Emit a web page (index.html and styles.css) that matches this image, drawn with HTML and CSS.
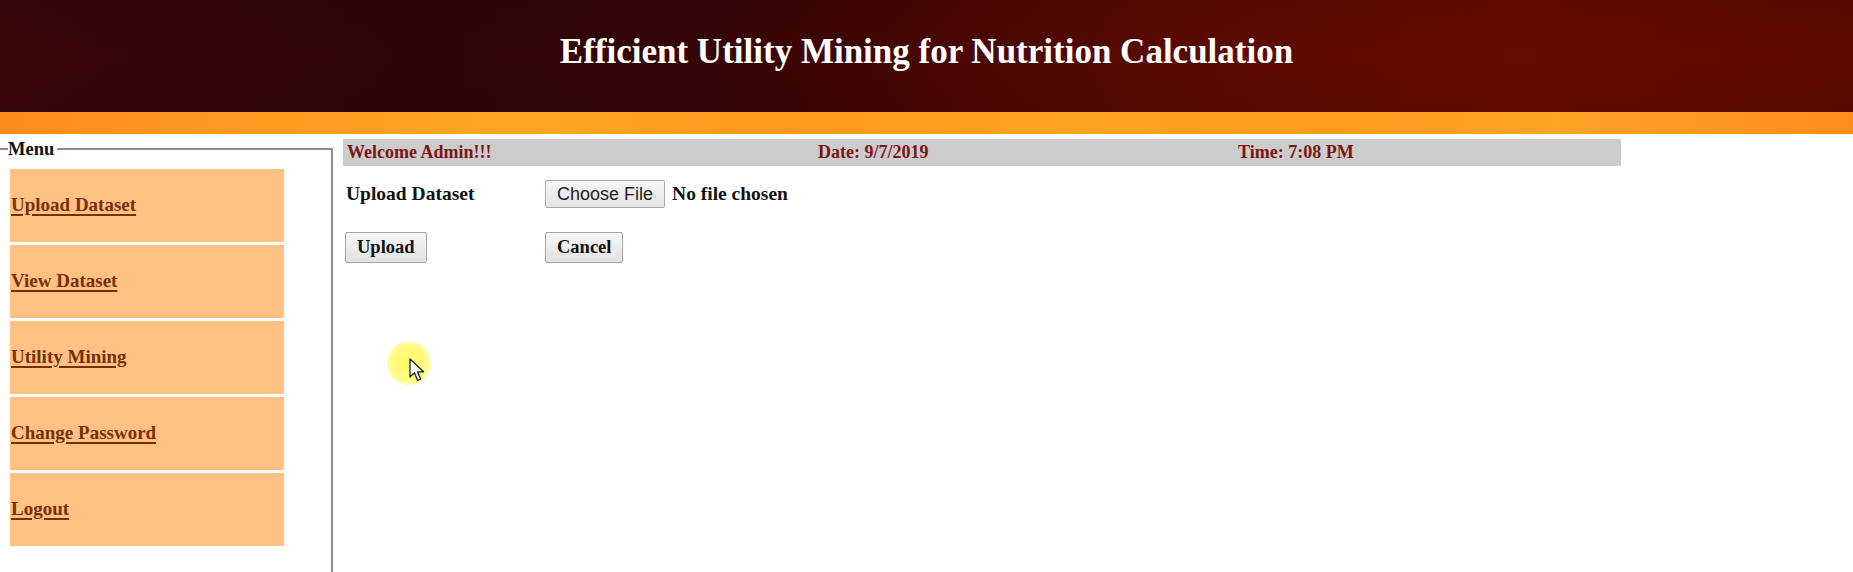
FILE: index.html
```html
<!DOCTYPE html>
<html lang="en">
<head>
<meta charset="utf-8">
<title>Efficient Utility Mining for Nutrition Calculation</title>
<link rel="stylesheet" href="styles.css">
</head>
<body>
<header class="top">
  <h1 class="title">Efficient Utility Mining for Nutrition Calculation</h1>
</header>
<div class="band"></div>
<div class="main">
  <fieldset class="menu">
    <legend class="menu-legend">Menu</legend>
    <nav class="menu-list">
      <a class="menu-item" href="#">Upload Dataset</a>
      <a class="menu-item" href="#">View Dataset</a>
      <a class="menu-item" href="#">Utility Mining</a>
      <a class="menu-item" href="#">Change Password</a>
      <a class="menu-item" href="#">Logout</a>
    </nav>
  </fieldset>
  <section class="content">
    <div class="status-bar">
      <span class="status-cell">Welcome Admin!!!</span>
      <span class="status-cell">Date: 9/7/2019</span>
      <span class="status-cell">Time: 7:08 PM</span>
    </div>
    <form class="upload-form">
      <span class="form-label">Upload Dataset</span>
      <label class="file-field">
        <span class="file-btn">Choose File</span>
        <span class="file-name">No file chosen</span>
      </label>
      <span class="form-cell"><button type="button" class="btn">Upload</button></span>
      <span class="form-cell"><button type="button" class="btn">Cancel</button></span>
    </form>
  </section>
</div>
<div class="cursor-glow"></div>
<svg class="cursor" width="16" height="26" viewBox="0 0 16 26">
  <path d="M1 1 L1 19 L5.5 14.8 L8.6 22.5 L11.6 21.2 L8.6 13.8 L14.6 13.8 Z" fill="#fff" stroke="#222" stroke-width="1.3" stroke-linejoin="round"/>
</svg>
</body>
</html>
```
FILE: styles.css
```css
html, body {
  margin: 0;
  padding: 0;
}
body {
  background: #fff;
  font-family: "Liberation Serif", "Times New Roman", serif;
  font-weight: bold;
  font-size: 19px;
  color: #111;
  overflow: hidden;
  height: 572px;
  position: relative;
}
.top {
  height: 112px;
  display: flex;
  align-items: center;
  justify-content: center;
  background:
    linear-gradient(180deg, rgba(0,0,0,0.06) 0%, rgba(0,0,0,0) 50%, rgba(0,0,0,0.05) 100%),
    linear-gradient(90deg, #3c0808 0%, #2e0404 22%, #350505 38%, #4a0703 52%, #5c0a02 66%, #660c00 82%, #5e0a00 100%);
}
.title {
  margin: 0;
  color: #fff;
  font-size: 35px;
  font-weight: bold;
  line-height: 1;
  padding-bottom: 10px;
}
.band {
  height: 22px;
  background: linear-gradient(90deg, #ff8c1c 0%, #ff9a20 12%, #ffa624 28%, #ff9a1e 42%, #ffa322 58%, #ff9c1e 72%, #ffa426 84%, #ff8d1a 100%);
}
.main {
  display: flex;
  align-items: flex-start;
  gap: 10px;
}
.menu {
  margin: 5px 0 0 -2px;
  padding: 10px 0 0 10px;
  min-height: 460px;
  border: 2px solid #8c8c8c;
  border-bottom: 0;
  box-sizing: border-box;
  width: 335px;
}
.menu-legend {
  padding: 0 3px 0 0;
  margin-left: -2px;
  font-size: 18.5px;
  line-height: 20px;
  color: #111;
}
.menu-list {
  display: flex;
  flex-direction: column;
  gap: 3px;
  width: 274px;
}
.menu-item {
  display: flex;
  align-items: center;
  height: 73px;
  background: #ffc283;
  color: #7a2f08;
  font-size: 19px;
  text-decoration: underline;
  text-decoration-thickness: 1.5px;
  text-underline-offset: 3px;
  padding-left: 1px;
  padding-bottom: 2px;
  box-sizing: border-box;
}
.content {
  margin-top: 5px;
  width: 1278px;
}
.status-bar {
  height: 27px;
  background: #cccccc;
  display: grid;
  grid-template-columns: 471px 420px 1fr;
  align-items: center;
  padding-left: 4px;
  color: #7d1414;
  font-size: 18px;
}
.upload-form {
  display: grid;
  grid-template-columns: 200px 1fr;
  grid-auto-rows: auto;
  align-items: center;
  row-gap: 24px;
  padding: 14px 0 0 2px;
  font-size: 19.5px;
}
.form-label {
  padding-left: 1px;
}
.file-field {
  display: flex;
  align-items: center;
  gap: 7px;
}
.file-btn {
  font-family: "Liberation Sans", Arial, sans-serif;
  font-weight: normal;
  font-size: 18px;
  color: #222;
  height: 28px;
  box-sizing: border-box;
  padding: 0 11px;
  display: flex;
  align-items: center;
  background: linear-gradient(180deg, #f6f6f6, #e4e4e4);
  border: 1px solid #a9a9a9;
  border-radius: 2px;
}
.file-name {
  color: #111;
}
.btn {
  font-family: "Liberation Serif", "Times New Roman", serif;
  font-weight: bold;
  font-size: 18.5px;
  color: #111;
  height: 31px;
  padding: 0 11px;
  background: linear-gradient(180deg, #f6f6f6, #e2e2e2);
  border: 1px solid #a5a5a5;
  border-radius: 2px;
}
.cursor-glow {
  position: absolute;
  left: 387px;
  top: 341px;
  width: 44px;
  height: 44px;
  border-radius: 50%;
  background: radial-gradient(circle, rgba(255,250,90,0.95) 0%, rgba(255,250,110,0.85) 55%, rgba(255,252,160,0.3) 85%, rgba(255,255,255,0) 100%);
}
.cursor {
  position: absolute;
  left: 409px;
  top: 358px;
}
```
